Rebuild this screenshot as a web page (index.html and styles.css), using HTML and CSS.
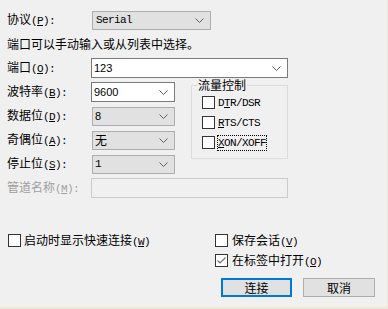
FILE: index.html
```html
<!DOCTYPE html>
<html lang="zh-CN">
<head>
  <meta charset="UTF-8" />
  <meta name="viewport" content="width=device-width, initial-scale=1.0" />
  <title>会话属性 - 连接</title>
  <link rel="stylesheet" href="styles.css">
</head>
<body>
  <div class="dialog">
    <div class="row">
      <label class="lbl lbl-proto">协议<span class="mn">(<u>P</u>):</span></label>
      <div class="combo combo-list w-proto"><span class="mono">Serial</span>
        <svg class="arrow" width="9" height="5" viewBox="0 0 9 5"><polyline points="0.5,0.5 4.5,4.5 8.5,0.5" /></svg>
      </div>
    </div>

    <p class="hint">端口可以手动输入或从列表中选择。</p>

    <div class="row">
      <label class="lbl">端口<span class="mn">(<u>O</u>):</span></label>
      <div class="combo combo-edit w-wide"><span class="num">123</span>
        <svg class="arrow" width="9" height="5" viewBox="0 0 9 5"><polyline points="0.5,0.5 4.5,4.5 8.5,0.5" /></svg>
      </div>
    </div>

    <div class="mid">
      <div class="fields">
        <div class="row">
          <label class="lbl">波特率<span class="mn">(<u>B</u>):</span></label>
          <div class="combo combo-edit w-short"><span class="num">9600</span>
            <svg class="arrow" width="9" height="5" viewBox="0 0 9 5"><polyline points="0.5,0.5 4.5,4.5 8.5,0.5" /></svg>
          </div>
        </div>
        <div class="row">
          <label class="lbl">数据位<span class="mn">(<u>D</u>):</span></label>
          <div class="combo combo-list w-list"><span class="num">8</span>
            <svg class="arrow" width="9" height="5" viewBox="0 0 9 5"><polyline points="0.5,0.5 4.5,4.5 8.5,0.5" /></svg>
          </div>
        </div>
        <div class="row">
          <label class="lbl">奇偶位<span class="mn">(<u>A</u>):</span></label>
          <div class="combo combo-list w-list"><span>无</span>
            <svg class="arrow" width="9" height="5" viewBox="0 0 9 5"><polyline points="0.5,0.5 4.5,4.5 8.5,0.5" /></svg>
          </div>
        </div>
        <div class="row">
          <label class="lbl">停止位<span class="mn">(<u>S</u>):</span></label>
          <div class="combo combo-list w-list"><span class="mono">1</span>
            <svg class="arrow" width="9" height="5" viewBox="0 0 9 5"><polyline points="0.5,0.5 4.5,4.5 8.5,0.5" /></svg>
          </div>
        </div>
      </div>

      <fieldset class="group">
        <legend>流量控制</legend>
        <div class="checks">
          <label class="check"><span class="box"></span><span class="mono">D<u>T</u>R/DSR</span></label>
          <label class="check"><span class="box"></span><span class="mono"><u>R</u>TS/CTS</span></label>
          <label class="check"><span class="box"></span><span class="mono focus"><u>X</u>ON/XOFF</span></label>
        </div>
      </fieldset>
    </div>

    <div class="row disabled">
      <label class="lbl">管道名称<span class="mn">(<u>M</u>):</span></label>
      <div class="combo combo-off w-wide"></div>
    </div>

    <div class="bottom">
      <label class="check"><span class="box"></span><span>启动时显示快速连接<span class="mn">(<u>W</u>)</span></span></label>
      <div class="side">
        <label class="check"><span class="box"></span><span>保存会话<span class="mn">(<u>V</u>)</span></span></label>
        <label class="check"><span class="box box-on">
          <svg width="11" height="11" viewBox="0 0 11 11"><polyline points="1.5,5.5 4,8 9.5,2.5" /></svg>
        </span><span>在标签中打开<span class="mn">(<u>O</u>)</span></span></label>
        <div class="buttons">
          <button type="button" class="btn btn-default">连接</button>
          <button type="button" class="btn">取消</button>
        </div>
      </div>
    </div>
  </div>
</body>
</html>
```

FILE: styles.css
```css
html,
body {
  margin: 0;
  padding: 0;
  background-color: #eee8d5;
}

body {
  font-family: "Noto Sans CJK SC", "Liberation Sans", sans-serif;
  font-size: 12px;
  line-height: 14px;
  color: #000;
}

.dialog {
  box-sizing: border-box;
  width: 387px;
  height: 307px;
  padding: 10px 0 0 7px;
  background-color: #f0f0f0;
}

.row {
  display: flex;
  align-items: center;
  height: 20px;
}

.lbl {
  width: 84px;
  flex-shrink: 0;
}

.lbl-proto {
  width: 85px;
}

.mn {
  font-family: "Liberation Mono", monospace;
  font-size: 11px;
  letter-spacing: -0.6px;
}

.mono {
  font-family: "Liberation Mono", monospace;
  font-size: 11px;
  letter-spacing: -0.6px;
}

.num {
  font-family: "Liberation Sans", Arial, sans-serif;
  font-size: 11px;
}

u {
  text-underline-offset: 1px;
}

/* combo boxes */
.combo {
  box-sizing: border-box;
  height: 20px;
  display: flex;
  align-items: center;
  justify-content: space-between;
  padding: 0 6px 0 2px;
}

.combo-edit {
  background-color: #fff;
  border: 1px solid #7a7a7a;
}

.combo-list {
  background-color: #e1e1e1;
  border: 1px solid #adadad;
  height: 19px;
}

.combo-off {
  background-color: #f0f0f0;
  border: 1px solid #cccccc;
}

.arrow polyline {
  fill: none;
  stroke: #606060;
  stroke-width: 1;
}

.w-proto {
  width: 119px;
  padding-left: 3px;
}

.w-wide {
  width: 197px;
}

.w-short {
  width: 84px;
}

.w-list {
  width: 83px;
  margin-left: 1px;
}

.hint {
  margin: 7px 0;
}

/* baud / data / parity / stop + flow control */
.mid {
  display: flex;
}

.fields {
  display: flex;
  flex-direction: column;
  gap: 4px;
  padding-top: 4px;
  width: 168px;
}

.group {
  box-sizing: border-box;
  width: 97px;
  height: 81px;
  margin: 0 0 0 16px;
  padding: 0 0 0 10px;
  border: 1px solid #dcdcdc;
}

.group legend {
  padding: 0 1px;
  margin-left: -5px;
  line-height: 14px;
}

.checks {
  display: flex;
  flex-direction: column;
  gap: 7px;
  padding-top: 4px;
}

.check {
  display: flex;
  align-items: center;
  height: 13px;
  gap: 3px;
  white-space: nowrap;
}

.box {
  box-sizing: border-box;
  width: 13px;
  height: 13px;
  flex-shrink: 0;
  background-color: #fff;
  border: 1px solid #333;
}

.box-on {
  display: flex;
  align-items: center;
  justify-content: center;
}

.box-on polyline {
  fill: none;
  stroke: #707070;
  stroke-width: 1.2;
}

.focus {
  outline: 1px dotted #000;
  outline-offset: 0;
}

.disabled {
  margin-top: 4px;
  color: #a0a0a0;
}

/* bottom area */
.bottom {
  display: flex;
  margin-top: 36px;
  padding-left: 1px;
}

.bottom > .check {
  width: 207px;
}

.side {
  display: flex;
  flex-direction: column;
  gap: 7px;
}

.side .check {
  gap: 4px;
}

.buttons {
  display: flex;
  gap: 11px;
  margin-top: 4px;
  padding-left: 6px;
}

.btn {
  box-sizing: border-box;
  width: 72px;
  height: 19px;
  padding: 0;
  font-family: "Noto Sans CJK SC", sans-serif;
  font-size: 12px;
  line-height: 14px;
  color: #000;
  background-color: #e1e1e1;
  border: 1px solid #adadad;
}

.btn-default {
  width: 71px;
  border: 2px solid #0078d7;
}
```
